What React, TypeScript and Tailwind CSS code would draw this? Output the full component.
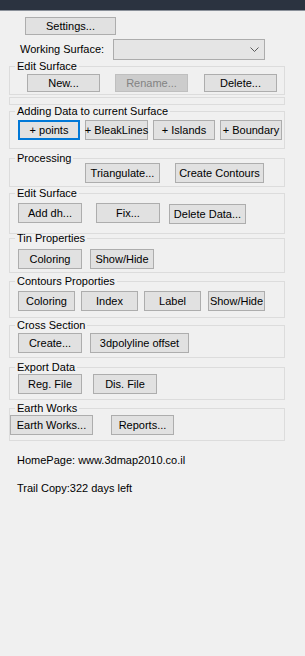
import React from "react";

type Btn = { label: string; w: string; h?: string; disabled?: boolean; focused?: boolean; cls?: string };

function WinButton({ label, w, h = "h-[20px]", disabled, focused, cls }: Btn) {
  const base = "flex items-center justify-center shrink-0 whitespace-nowrap leading-none";
  const look = disabled
    ? "bg-[#cccccc] border border-[#bfbfbf] text-[#838383]"
    : focused
    ? "bg-[#e1e1e1] border-2 border-[#0078d7] text-black"
    : "bg-[#e1e1e1] border border-[#adadad] text-black";
  return (
    <button type="button" disabled={disabled} className={`${base} ${look} ${w} ${h} ${cls ?? ""}`}>
      {label}
    </button>
  );
}

function Group({
  title,
  className,
  children,
}: {
  title: string;
  className?: string;
  children: React.ReactNode;
}) {
  return (
    <fieldset className={`w-[276px] border border-[#dcdcdc] ${className ?? ""}`}>
      <legend className="ml-[5px] px-[2px] leading-[12px] text-black">{title}</legend>
      {children}
    </fieldset>
  );
}

export default function App() {
  return (
    <div className="w-[305px] h-[656px] bg-[#f0f0f0] text-[11px] text-black font-['Liberation_Sans',Arial,sans-serif] overflow-hidden">
      {/* window chrome strip */}
      <div className="h-[10px] bg-[#2b3340]" />
      <div className="h-px bg-[#8a9099]" />

      {/* settings */}
      <div className="pl-[25px] pt-[6px]">
        <button
          type="button"
          className="w-[91px] h-[18px] bg-[#e1e1e1] border border-[#adadad] flex items-center justify-center leading-none"
        >
          Settings...
        </button>
      </div>

      {/* working surface */}
      <div className="flex items-center mt-[4px] h-[21px]">
        <div className="w-[113px] pl-[20px] whitespace-nowrap">Working Surface:</div>
        <div className="w-[152px] h-[21px] bg-[#e5e5e5] border border-[#acacac] flex items-center justify-end pr-[5px]">
          <svg width="9" height="5" viewBox="0 0 9 5" fill="none">
            <polyline points="0.5,0.5 4.5,4.5 8.5,0.5" stroke="#5a5a5a" strokeWidth="1" />
          </svg>
        </div>
      </div>

      <div className="pl-[9px] flex flex-col">
        <Group title="Edit Surface">
          <div className="flex pl-[17px] gap-[15px] pt-[2px] pb-[2px]">
            <WinButton label="New..." w="w-[73px]" h="h-[18px]" />
            <WinButton label="Rename..." w="w-[73px]" h="h-[18px]" disabled />
            <WinButton label="Delete..." w="w-[73px]" h="h-[18px]" cls="ml-px" />
          </div>
        </Group>

        <div className="w-[276px] h-[8px] mt-[2px] border border-[#dcdcdc]" />

        <Group title="Adding Data to current Surface">
          <div className="flex pl-[8px] gap-[5px] pt-[3px] pb-[8px]">
            <WinButton label="+ points" w="w-[62px]" focused />
            <WinButton label="+ BleakLines" w="w-[63px]" />
            <WinButton label="+ Islands" w="w-[62px]" />
            <WinButton label="+ Boundary" w="w-[62px]" />
          </div>
        </Group>

        <Group title="Processing" className="mt-[3px]">
          <div className="flex pl-[75px] gap-[15px] -mt-px pb-[3px]">
            <WinButton label="Triangulate..." w="w-[75px]" />
            <WinButton label="Create Contours" w="w-[89px]" />
          </div>
        </Group>

        <Group title="Edit Surface">
          <div className="flex items-start pl-[8px] pt-[4px] pb-[9px]">
            <WinButton label="Add dh..." w="w-[64px]" />
            <WinButton label="Fix..." w="w-[64px]" cls="ml-[14px]" />
            <WinButton label="Delete Data..." w="w-[77px]" cls="ml-[9px] mt-px" />
          </div>
        </Group>

        <Group title="Tin Properties" className="-mt-[2px]">
          <div className="flex pl-[8px] gap-[8px] pt-[5px] pb-[3px]">
            <WinButton label="Coloring" w="w-[64px]" />
            <WinButton label="Show/Hide" w="w-[64px]" />
          </div>
        </Group>

        <Group title="Contours Proporties" className="mt-[2px]">
          <div className="flex pl-[8px] gap-[6px] pt-[4px] pb-[6px]">
            <WinButton label="Coloring" w="w-[57px]" />
            <WinButton label="Index" w="w-[57px]" />
            <WinButton label="Label" w="w-[57px]" />
            <WinButton label="Show/Hide" w="w-[57px]" cls="ml-px" />
          </div>
        </Group>

        <Group title="Cross Section" className="mt-px">
          <div className="flex pl-[8px] gap-[8px] pt-[2px] pb-[4px]">
            <WinButton label="Create..." w="w-[64px]" />
            <WinButton label="3dpolyline offset" w="w-[99px]" />
          </div>
        </Group>

        <Group title="Export Data" className="mt-[3px]">
          <div className="flex pl-[8px] gap-[11px] pt-px pb-[5px]">
            <WinButton label="Reg. File" w="w-[64px]" />
            <WinButton label="Dis. File" w="w-[64px]" />
          </div>
        </Group>

        <Group title="Earth Works" className="mt-[2px]">
          <div className="flex gap-[18px] pt-px pb-[5px]">
            <WinButton label="Earth Works..." w="w-[83px]" />
            <WinButton label="Reports..." w="w-[63px]" />
          </div>
        </Group>
      </div>

      <div className="pl-[17px] mt-[13px] leading-[12px]">HomePage: www.3dmap2010.co.il</div>
      <div className="pl-[17px] mt-[16px] leading-[12px]">Trail Copy:322 days left</div>
    </div>
  );
}
